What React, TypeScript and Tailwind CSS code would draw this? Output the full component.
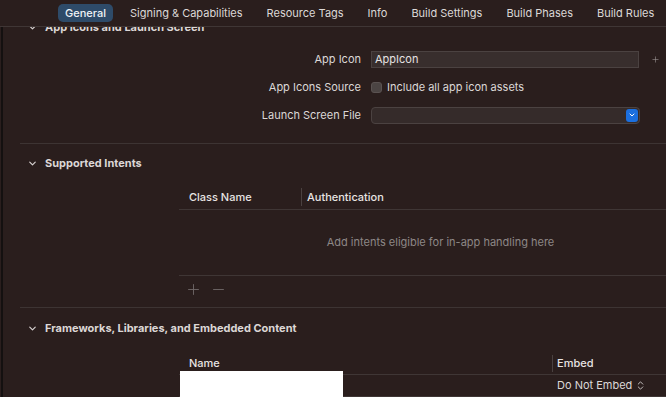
import { FC } from 'react';
import { ChevronDown, ChevronsUpDown, Plus, Minus } from 'lucide-react';

const tabs = ['General', 'Signing & Capabilities', 'Resource Tags', 'Info', 'Build Settings', 'Build Phases', 'Build Rules'];

const SectionHeader: FC<{ title: string; className?: string }> = ({ title, className }) => (
  <div className={`flex items-center h-[20px] pl-[27px] ${className ?? ''}`}>
    <ChevronDown size={11} strokeWidth={2.6} className="text-[#d6d1d0]" />
    <span className="ml-[7px] text-[11px] font-bold text-[#dcd7d6]">{title}</span>
  </div>
);

const FormRow: FC<{ label: string; children: React.ReactNode }> = ({ label, children }) => (
  <div className="flex items-center h-[28px]">
    <div className="w-[361px] text-right text-[11px] text-[#dcd8d7] shrink-0">{label}</div>
    <div className="ml-[10px] flex-1 flex items-center">{children}</div>
  </div>
);

export default function App() {
  return (
    <div className="w-[666px] h-[397px] bg-[#2a1e1d] overflow-hidden flex flex-col" style={{ fontFamily: 'Inter, "Liberation Sans", sans-serif' }}>
      {/* tab bar */}
      <div className="h-[27px] shrink-0 border-b border-[#3f3635] flex items-center pl-[53px]">
        {tabs.map((t) => (
          <div
            key={t}
            className={`mx-[5px] px-[7px] h-[18px] flex items-center rounded-[5px] text-[11px] whitespace-nowrap ${
              t === 'General' ? 'bg-[#2e4b69] text-[#eef2f6] font-medium' : 'text-[#dcd8d7]'
            }`}
          >
            {t}
          </div>
        ))}
      </div>

      <div className="flex-1 flex overflow-hidden">
        <div className="w-[2px] ml-[1px] bg-[#141010] shrink-0" />
        <div className="flex-1 overflow-hidden">
          <SectionHeader title="App Icons and Launch Screen" className="-mt-[10px] -ml-[3px]" />

          <div className="mt-[8px] -ml-[3px]">
            <FormRow label="App Icon">
              <div className="w-[268px] h-[17px] bg-[#382e2d] border border-[#4b4241] text-[11px] text-[#e6e2e1] pl-[3px] leading-[15px]">
                AppIcon
              </div>
              <Plus size={9} strokeWidth={1.6} className="ml-[12px] text-[#9c9695]" />
            </FormRow>
            <FormRow label="App Icons Source">
              <div className="w-[11px] h-[11px] rounded-[3px] bg-[#4b4443] border border-[#5a5251]" />
              <span className="ml-[5px] text-[11px] text-[#dcd8d7]">Include all app icon assets</span>
            </FormRow>
            <FormRow label="Launch Screen File">
              <div className="w-[269px] h-[17px] bg-[#352b2a] border border-[#4b4241] rounded-[4px] flex items-center justify-end pr-[1px]">
                <div className="w-[12px] h-[13px] bg-[#1b6fdf] rounded-[3px] flex items-center justify-center">
                  <ChevronDown size={8} strokeWidth={3} className="text-white" />
                </div>
              </div>
            </FormRow>
          </div>

          <div className="mt-[14px] ml-[17px] h-px bg-[#3d3433]" />

          <SectionHeader title="Supported Intents" className="mt-[9px] -ml-[3px]" />

          <div className="mt-[12px] ml-[176px]">
            <div className="h-[25px] flex items-center border-b border-[#3f3635] text-[11px] font-medium text-[#e8e4e3]">
              <div className="w-[122px] pl-[10px] shrink-0">Class Name</div>
              <div className="h-[18px] w-px bg-[#4a4140]" />
              <div className="pl-[5px]">Authentication</div>
            </div>
            <div className="h-[66px] pl-[36px] flex items-center justify-center border-b border-[#3f3635] text-[11px] text-[#8d8786]">
              Add intents eligible for in-app handling here
            </div>
            <div className="h-[24px] pt-[2px] flex items-center pl-[6px] gap-[8px] text-[#6f6867]">
              <Plus size={17} strokeWidth={1.3} />
              <Minus size={17} strokeWidth={1.3} />
            </div>
          </div>

          <div className="mt-[7px] ml-[17px] h-px bg-[#3d3433]" />

          <SectionHeader title="Frameworks, Libraries, and Embedded Content" className="mt-[10px] -ml-[3px]" />

          <div className="mt-[11px] ml-[176px]">
            <div className="h-[26px] pt-[3px] flex items-center border-b border-[#3f3635] text-[11px] font-medium text-[#e8e4e3]">
              <div className="w-[373px] pl-[10px] shrink-0">Name</div>
              <div className="h-[17px] w-px bg-[#4a4140]" />
              <div className="pl-[4px]">Embed</div>
            </div>
            <div className="h-[22px] flex items-center border-b border-[#3f3635]">
              <div className="w-[163px] h-[26px] -mt-[4px] ml-px bg-white shrink-0" />
              <div className="ml-[214px] flex items-center text-[11px] text-[#dcd8d7]">
                Do Not Embed
                <ChevronsUpDown size={11} strokeWidth={2} className="ml-[3px] text-[#cfcac9]" />
              </div>
            </div>
          </div>
        </div>
      </div>
    </div>
  );
}
